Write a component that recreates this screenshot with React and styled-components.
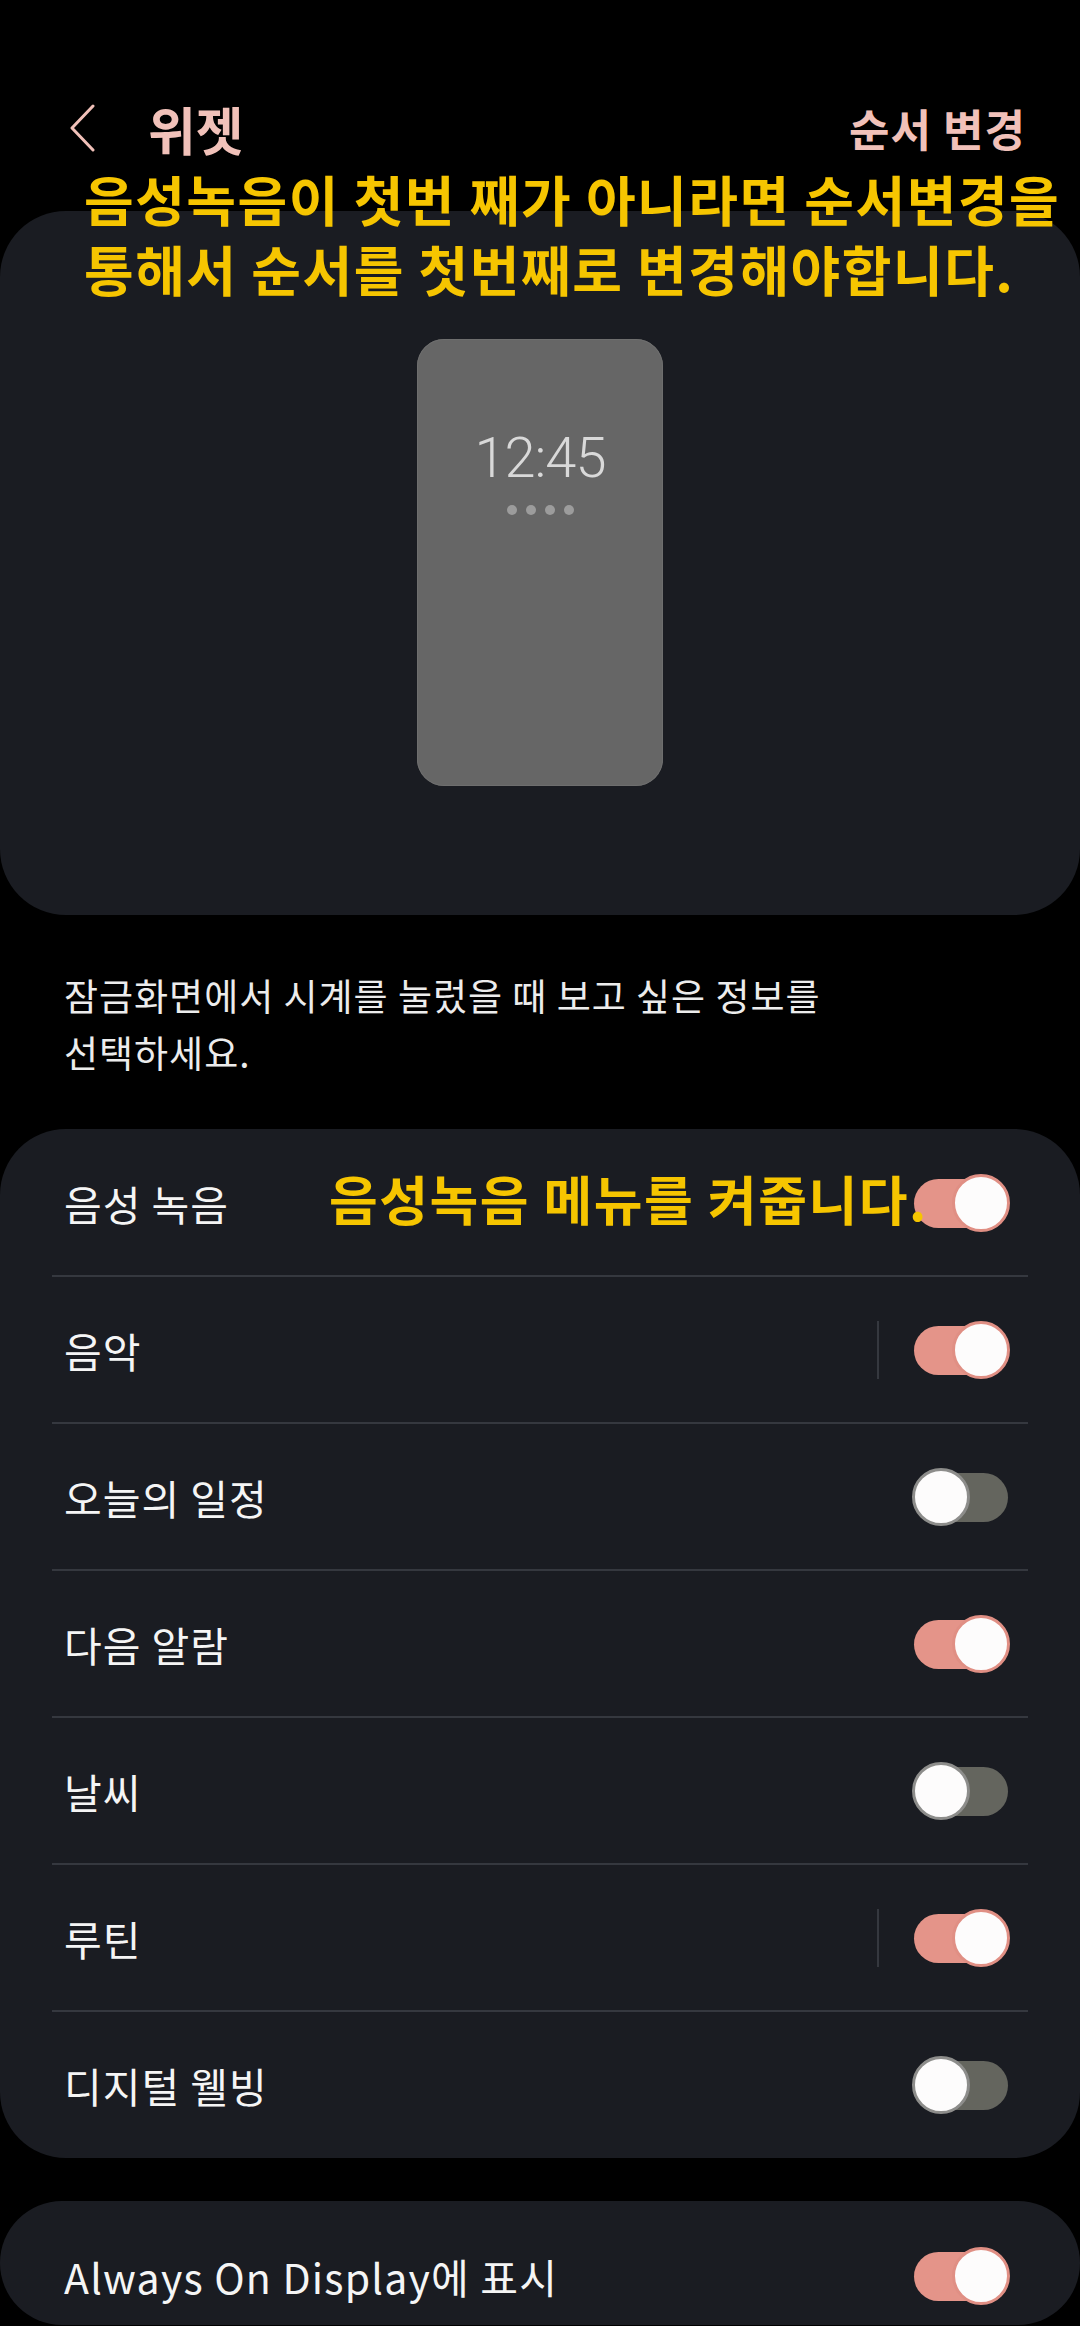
import React from 'react';
import styled, { createGlobalStyle } from 'styled-components';

const GlobalStyle = createGlobalStyle`
  html, body {
    margin: 0;
    padding: 0;
    background: #000;
  }
  body {
    font-family: "Noto Sans CJK KR", "Noto Sans", sans-serif;
    overflow: hidden;
  }
`;

const PINK = '#f1c1b9';
const CARD = '#1a1c22';
const LINE = '#35383f';
const YELLOW = '#f6c500';

const Page = styled.div`
  position: relative;
  width: 1080px;
  min-height: 2326px;
  background: #000;
`;

const Header = styled.header`
  display: flex;
  align-items: center;
  height: 96px;
  padding: 80px 54px 0 69px;
`;

const BackButton = styled.button`
  display: flex;
  align-items: center;
  padding: 0;
  border: 0;
  background: none;
  margin-right: 53px;
`;

const Title = styled.h1`
  flex: 1;
  margin: 0;
  font-size: 52px;
  font-weight: 700;
  color: ${PINK};
  letter-spacing: 0;
`;

const Action = styled.span`
  font-size: 44px;
  font-weight: 700;
  color: ${PINK};
  letter-spacing: 1px;
`;

const PreviewCard = styled.section`
  display: flex;
  justify-content: center;
  height: 576px;
  margin-top: 35px;
  padding-top: 128px;
  border-radius: 66px;
  background: ${CARD};
`;

const Phone = styled.div`
  display: flex;
  flex-direction: column;
  align-items: center;
  width: 246px;
  height: 447px;
  border-radius: 27px;
  background: #666;
  box-shadow: inset 0 0 0 1px #6e6e6e;
`;

const Clock = styled.div`
  margin-top: 91px;
  font-family: Roboto, "Noto Sans", sans-serif;
  font-weight: 300;
  font-size: 56px;
  line-height: 56px;
  color: #d9d9d9;
  letter-spacing: -1px;
`;

const Dots = styled.div`
  display: flex;
  gap: 9px;
  margin-top: 19px;
`;

const Dot = styled.span`
  width: 10px;
  height: 10px;
  border-radius: 50%;
  background: #9c9c9c;
`;

const Description = styled.p`
  margin: 52px 0 0;
  padding: 0 64px;
  font-size: 37px;
  line-height: 57px;
  color: #ececec;
  letter-spacing: 1px;
`;

const ListCard = styled.section`
  margin-top: 48px;
  padding: 1px 0;
  border-radius: 66px;
  background: ${CARD};
  overflow: hidden;
`;

const BottomCard = styled(ListCard)`
  height: 124px;
  margin-top: 43px;
  padding: 0;
`;

const Row = styled.div`
  position: relative;
  display: flex;
  align-items: center;
  height: ${p => p.$h || 145}px;
  padding: 0 70px 0 64px;
`;

const Divider = styled.div`
  height: 2px;
  margin: 0 52px;
  background: ${LINE};
`;

const Label = styled.span`
  flex: 1;
  font-size: 41px;
  color: #f5f5f5;
  letter-spacing: ${p => (p.$ls != null ? p.$ls : 1)}px;
`;

const Split = styled.span`
  width: 2px;
  height: 58px;
  margin-right: 33px;
  background: ${LINE};
`;

const Toggle = styled.span`
  position: relative;
  display: flex;
  align-items: center;
  justify-content: ${p => (p.$on ? 'flex-end' : 'flex-start')};
  width: 98px;
  height: 58px;
`;

const Track = styled.span`
  position: absolute;
  left: 2px;
  right: 2px;
  top: 5px;
  height: 49px;
  border-radius: 25px;
  background: ${p => (p.$on ? '#e49489' : '#64655e')};
`;

const Thumb = styled.span`
  position: relative;
  box-sizing: border-box;
  width: 58px;
  height: 58px;
  border-radius: 50%;
  background: #fdfcfc;
  border: 3px solid ${p => (p.$on ? '#e08f84' : '#8d8d8b')};
`;

const Note = styled.div`
  position: absolute;
  left: ${p => p.$x}px;
  top: ${p => p.$y}px;
  font-size: ${p => p.$size}px;
  line-height: 70px;
  font-weight: 700;
  color: ${YELLOW};
  white-space: nowrap;
  letter-spacing: 1.5px;
  z-index: 2;
`;

const items = [
  { label: '음성 녹음', on: true },
  { label: '음악', on: true, split: true },
  { label: '오늘의 일정', on: false },
  { label: '다음 알람', on: true },
  { label: '날씨', on: false },
  { label: '루틴', on: true, split: true },
  { label: '디지털 웰빙', on: false },
];

function Switch({ on }) {
  return (
    <Toggle $on={on}>
      <Track $on={on} />
      <Thumb $on={on} />
    </Toggle>
  );
}

export default function App() {
  return (
    <Page>
      <GlobalStyle />
      <Header>
        <BackButton>
          <svg width="26" height="48" viewBox="0 0 26 48">
            <path d="M24 2 L3 24 L24 46" fill="none" stroke={PINK} strokeWidth="3" strokeLinecap="round" strokeLinejoin="round" />
          </svg>
        </BackButton>
        <Title>위젯</Title>
        <Action>순서 변경</Action>
      </Header>

      <Note $x={84} $y={164} $size={54}>
        음성녹음이 첫번 째가 아니라면 순서변경을
        <br />
        통해서 순서를 첫번째로 변경해야합니다.
      </Note>

      <PreviewCard>
        <Phone>
          <Clock>12:45</Clock>
          <Dots>
            <Dot />
            <Dot />
            <Dot />
            <Dot />
          </Dots>
        </Phone>
      </PreviewCard>

      <Description>
        잠금화면에서 시계를 눌렀을 때 보고 싶은 정보를
        <br />
        선택하세요.
      </Description>

      <ListCard>
        {items.map((item, i) => (
          <React.Fragment key={item.label}>
            {i > 0 && <Divider />}
            <Row>
              <Label>{item.label}</Label>
              {i === 0 && (
                <Note $x={329} $y={33} $size={53}>
                  음성녹음 메뉴를 켜줍니다.
                </Note>
              )}
              {item.split && <Split />}
              <Switch on={item.on} />
            </Row>
          </React.Fragment>
        ))}
      </ListCard>

      <BottomCard>
        <Row $h={150}>
          <Label $ls={1.2}>Always On Display에 표시</Label>
          <Switch on />
        </Row>
      </BottomCard>
    </Page>
  );
}
